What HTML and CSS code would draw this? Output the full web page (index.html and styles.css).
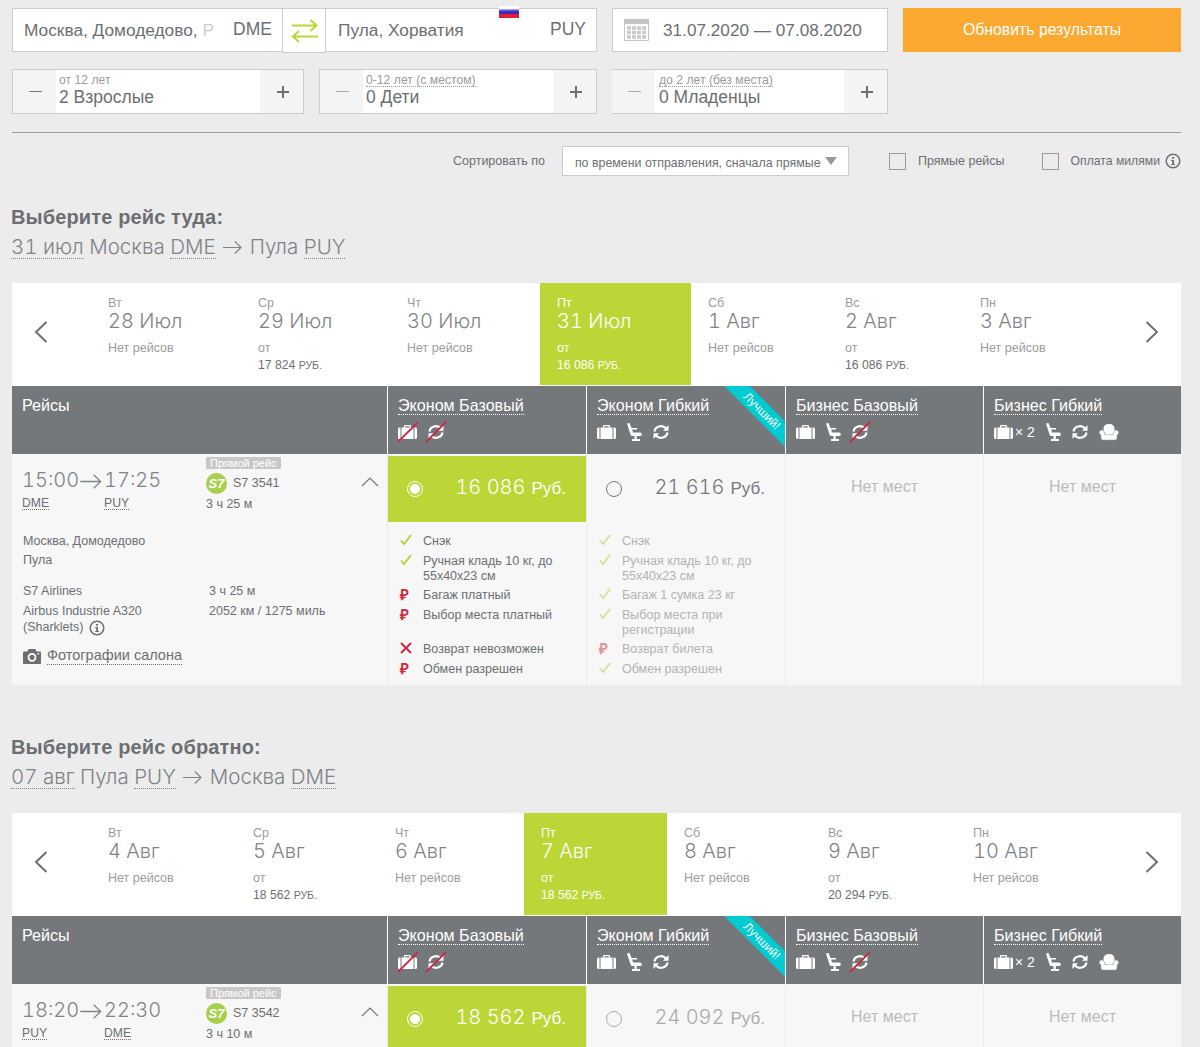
FILE: index.html
```
<!DOCTYPE html>
<html lang="ru">
<head>
	<meta charset="utf-8">
	<title>Выбор рейсов</title>
	<link rel="stylesheet" href="styles.css">
</head>
<body>
	<!-- Icons -->
	<svg class="sprite">
		<symbol id="bag" viewBox="0 0 19 14">
			<path d="M0 4q0-1.500 1.500-1.500H2.500V14H1.500Q0 14 0 12.500zM16.500 2.500h1Q19 2.500 19 4v8.500Q19 14 17.500 14h-1zM3.500 2.500H6V1q0-1 1-1h5q1 0 1 1v1.500h2.500V14h-12zM7.200 2.500h4.600V1.200H7.200z" fill-rule="evenodd" fill="#fff"/>
		</symbol>
		<symbol id="seat" viewBox="0 0 15 18">
			<path d="M0 0.500L2.500 0 4.500 5H10v1.600H5.200L6 9.500h7q2 0 1.800 2-.2 1.500-1.500 1.500H9.800v3H13V18H5v-2h2.500V13H5.500Q4 13 3.500 11.500z" fill="#fff"/>
		</symbol>
		<symbol id="turn" viewBox="0 0 16 16">
			<path d="M1.500 7.500A6.500 6 0 0 1 13 4.500M14.500 8.500A6.500 6 0 0 1 3 11.500" fill="none" stroke="#fff" stroke-width="2.200"/>
			<path d="M15.500 1V6.800H10zM0.500 15V9.200H6z" fill="#fff"/>
		</symbol>
		<symbol id="sofa" viewBox="0 0 20 17">
			<path d="M4.500 7V5Q4.500 0 10 0t5.500 5V7L13 11H7z" fill="#fff"/>
			<path d="M3 6Q.3 6.200.3 8.500.3 10 2 11V14q0 2 2 2H16q2 0 2-2V11q1.700-1 1.700-2.500Q19.700 6.200 17 6q-2 0-3 4.500H6Q5 6 3 6z" fill="#fff" stroke="#9a9c9e" stroke-width=".5"/>
		</symbol>
		<symbol id="info" viewBox="0 0 16 16">
			<circle cx="8" cy="8" r="6.800" fill="none" stroke="#6c6f72" stroke-width="1.500"/>
			<path d="M7 4h2v1.700H7zM6.200 7H9v4h1v1H6.200v-1H7.200V8h-1z" fill="#6c6f72"/>
		</symbol>
		<symbol id="check" viewBox="0 0 12 12">
			<path d="M1 6.500L4 10 11 1" fill="none" stroke="#b0d136" stroke-width="1.800"/>
		</symbol>
		<symbol id="cross" viewBox="0 0 12 12">
			<path d="M1 1L11 11M11 1L1 11" stroke="#cf2940" stroke-width="2"/>
		</symbol>
		<symbol id="camera" viewBox="0 0 18 15">
			<path d="M0 3.500q0-1 1-1H4.500L5.500 0h7l1 2.500H17Q18 2.500 18 3.500v10.500q0 1-1 1H1Q0 15 0 14z" fill="#6c6f72"/>
			<circle cx="9" cy="8.300" r="3.500" fill="none" stroke="#fff" stroke-width="1.800"/>
			<rect x="14.500" y="4" width="1.500" height="1.500" fill="#fff"/>
		</symbol>
		<symbol id="prev" viewBox="0 0 14 22">
			<path d="M12.500 1L2 11 12.500 21" fill="none" stroke="#6c6f72" stroke-width="2"/>
		</symbol>
		<symbol id="next" viewBox="0 0 14 22">
			<path d="M1.500 1L12 11 1.500 21" fill="none" stroke="#6c6f72" stroke-width="2"/>
		</symbol>
		<symbol id="arrow" viewBox="0 0 20 14">
			<path d="M0 7H19M12.500.7L19 7l-6.500 6.300" fill="none" stroke="#808386" stroke-width="1.200"/>
		</symbol>
		<symbol id="up" viewBox="0 0 18 10">
			<path d="M1 9L9 1l8 8" fill="none" stroke="#75787b" stroke-width="1.200"/>
		</symbol>
	</svg>

	<div class="page">
		<!-- Search form -->
		<div class="search">
			<div class="cities">
				<div class="field from"><span class="city">Москва, Домодедово, <i>Р</i></span><span class="code">DME</span></div>
				<div class="swap">
					<svg width="28" height="24" viewBox="0 0 28 24"><path d="M1 6.500H26M19.500 1l6 5.500-6 5.500M27 17.500H2M8 12l-6 5.500L8 23" fill="none" stroke="#bcd637" stroke-width="2"/></svg>
				</div>
				<div class="field to"><span class="city">Пула, Хорватия</span><span class="code">PUY</span><span class="flag"></span></div>
			</div>
			<div class="field dates">
				<svg width="25" height="22" viewBox="0 0 25 22"><path d="M.5.500h24v21H.5z" fill="none" stroke="#c5c5c5"/><path d="M0 0h25v5H0z" fill="#c5c5c5"/><path d="M3 9H22M3 13.500H22M3 18H22" stroke="#c8c8c8" stroke-width="3.500" stroke-dasharray="3.800 1.270"/></svg>
				<span>31.07.2020 — 07.08.2020</span>
			</div>
			<div class="submit"><span>Обновить результаты</span></div>
		</div>
		<div class="pax">
			<div class="counter adults">
				<div class="btn"><b class="minus"></b></div>
				<div class="val"><small>от 12 лет</small><span>2 Взрослые</span></div>
				<div class="btn"><b class="plus"></b></div>
			</div>
			<div class="counter kids">
				<div class="btn off"><b class="minus"></b></div>
				<div class="val"><small class="dot">0-12 лет (с местом)</small><span>0 Дети</span></div>
				<div class="btn"><b class="plus"></b></div>
			</div>
			<div class="counter infants">
				<div class="btn off"><b class="minus"></b></div>
				<div class="val"><small class="dot">до 2 лет (без места)</small><span>0 Младенцы</span></div>
				<div class="btn"><b class="plus"></b></div>
			</div>
		</div>

		<div class="sort">
			<span class="sort-label">Сортировать по</span>
			<div class="select"><span>по времени отправления, сначала прямые</span><i></i></div>
			<div class="box"></div><span class="direct">Прямые рейсы</span>
			<div class="box"></div><span class="miles">Оплата милями</span>
			<svg width="16" height="16"><use href="#info"/></svg>
		</div>

		<!-- Outbound -->
		<section>
			<h2>Выберите рейс туда:</h2>
			<div class="route"><u>31 июл</u> Москва <u>DME</u> <svg width="19" height="15"><use href="#arrow"/></svg> Пула <u>PUY</u></div>
			<div class="week week-there">
				<div class="nav"><svg width="14" height="22"><use href="#prev"/></svg></div>
				<div class="day"><small>Вт</small><b>28 Июл</b><span>Нет рейсов</span></div>
				<div class="day"><small>Ср</small><b>29 Июл</b><span>от</span><em>17 824 <i>РУБ.</i></em></div>
				<div class="day"><small>Чт</small><b>30 Июл</b><span>Нет рейсов</span></div>
				<div class="day active"><small>Пт</small><b>31 Июл</b><span>от</span><em>16 086 <i>РУБ.</i></em></div>
				<div class="day"><small>Сб</small><b>1 Авг</b><span>Нет рейсов</span></div>
				<div class="day"><small>Вс</small><b>2 Авг</b><span>от</span><em>16 086 <i>РУБ.</i></em></div>
				<div class="day"><small>Пн</small><b>3 Авг</b><span>Нет рейсов</span></div>
				<div class="nav"><svg width="14" height="22"><use href="#next"/></svg></div>
			</div>
			<div class="fares head">
				<div>Рейсы</div>
				<div><u>Эконом Базовый</u>
					<p><span class="no"><svg width="19" height="14"><use href="#bag"/></svg></span><span class="no gap"><svg width="16" height="16"><use href="#turn"/></svg></span></p>
				</div>
				<div><u>Эконом Гибкий</u>
					<p><svg width="19" height="14"><use href="#bag"/></svg><svg class="gap" width="15" height="18"><use href="#seat"/></svg><svg class="gap" width="16" height="16"><use href="#turn"/></svg></p>
					<div class="corner"><span>Лучший!</span></div>
				</div>
				<div><u>Бизнес Базовый</u>
					<p><svg width="19" height="14"><use href="#bag"/></svg><svg class="gap" width="15" height="18"><use href="#seat"/></svg><span class="no gap"><svg width="16" height="16"><use href="#turn"/></svg></span></p>
				</div>
				<div><u>Бизнес Гибкий</u>
					<p><svg width="19" height="14"><use href="#bag"/></svg><span class="x2">× 2</span><svg class="gap" width="15" height="18"><use href="#seat"/></svg><svg class="gap" width="16" height="16"><use href="#turn"/></svg><svg class="gap" width="20" height="17"><use href="#sofa"/></svg></p>
				</div>
			</div>
			<div class="fares body">
				<div class="flight">
					<div class="summary">
						<div class="times">
							<div class="dep"><b>15:00</b><u>DME</u></div>
							<svg width="22" height="15"><use href="#arrow"/></svg>
							<div class="arr"><b>17:25</b><u>PUY</u></div>
						</div>
						<div class="number">
							<span class="tag">Прямой рейс</span>
							<div class="carrier"><i>S7</i>S7 3541</div>
							<span>3 ч 25 м</span>
						</div>
						<svg class="toggle" width="18" height="10"><use href="#up"/></svg>
					</div>
					<div class="details">
						<div class="left">
							<p>Москва, Домодедово</p>
							<p>Пула</p>
							<p class="airline">S7 Airlines</p>
							<p>Airbus Industrie A320</p>
							<p class="model">(Sharklets) <svg width="16" height="16"><use href="#info"/></svg></p>
						</div>
						<div class="right">
							<p>3 ч 25 м</p>
							<p>2052 км / 1275 миль</p>
						</div>
					</div>
					<div class="photos"><svg width="18" height="15"><use href="#camera"/></svg><u>Фотографии салона</u></div>
				</div>
				<div class="fare selected">
					<div class="price"><i class="radio"></i><b>16 086</b><span>Руб.</span></div>
					<ul>
						<li><svg width="12" height="12"><use href="#check"/></svg>Снэк</li>
						<li><svg width="12" height="12"><use href="#check"/></svg>Ручная кладь 10 кг, до<br>55х40х23 см</li>
						<li><i>₽</i>Багаж платный</li>
						<li class="two"><i>₽</i>Выбор места платный</li>
						<li><svg width="12" height="12"><use href="#cross"/></svg>Возврат невозможен</li>
						<li><i>₽</i>Обмен разрешен</li>
					</ul>
				</div>
				<div class="fare">
					<div class="price"><i class="radio"></i><b>21 616</b><span>Руб.</span></div>
					<ul class="dim">
						<li><svg width="12" height="12"><use href="#check"/></svg>Снэк</li>
						<li><svg width="12" height="12"><use href="#check"/></svg>Ручная кладь 10 кг, до<br>55х40х23 см</li>
						<li><svg width="12" height="12"><use href="#check"/></svg>Багаж 1 сумка 23 кг</li>
						<li class="two"><svg width="12" height="12"><use href="#check"/></svg>Выбор места при<br>регистрации</li>
						<li><i>₽</i>Возврат билета</li>
						<li><svg width="12" height="12"><use href="#check"/></svg>Обмен разрешен</li>
					</ul>
				</div>
				<div class="fare none">Нет мест</div>
				<div class="fare none">Нет мест</div>
			</div>
		</section>

		<!-- Return -->
		<section>
			<h2>Выберите рейс обратно:</h2>
			<div class="route"><u>07 авг</u> Пула <u>PUY</u> <svg width="19" height="15"><use href="#arrow"/></svg> Москва <u>DME</u></div>
			<div class="week week-back">
				<div class="nav"><svg width="14" height="22"><use href="#prev"/></svg></div>
				<div class="day"><small>Вт</small><b>4 Авг</b><span>Нет рейсов</span></div>
				<div class="day"><small>Ср</small><b>5 Авг</b><span>от</span><em>18 562 <i>РУБ.</i></em></div>
				<div class="day"><small>Чт</small><b>6 Авг</b><span>Нет рейсов</span></div>
				<div class="day active"><small>Пт</small><b>7 Авг</b><span>от</span><em>18 562 <i>РУБ.</i></em></div>
				<div class="day"><small>Сб</small><b>8 Авг</b><span>Нет рейсов</span></div>
				<div class="day"><small>Вс</small><b>9 Авг</b><span>от</span><em>20 294 <i>РУБ.</i></em></div>
				<div class="day"><small>Пн</small><b>10 Авг</b><span>Нет рейсов</span></div>
				<div class="nav"><svg width="14" height="22"><use href="#next"/></svg></div>
			</div>
			<div class="fares head">
				<div>Рейсы</div>
				<div><u>Эконом Базовый</u>
					<p><span class="no"><svg width="19" height="14"><use href="#bag"/></svg></span><span class="no gap"><svg width="16" height="16"><use href="#turn"/></svg></span></p>
				</div>
				<div><u>Эконом Гибкий</u>
					<p><svg width="19" height="14"><use href="#bag"/></svg><svg class="gap" width="15" height="18"><use href="#seat"/></svg><svg class="gap" width="16" height="16"><use href="#turn"/></svg></p>
					<div class="corner"><span>Лучший!</span></div>
				</div>
				<div><u>Бизнес Базовый</u>
					<p><svg width="19" height="14"><use href="#bag"/></svg><svg class="gap" width="15" height="18"><use href="#seat"/></svg><span class="no gap"><svg width="16" height="16"><use href="#turn"/></svg></span></p>
				</div>
				<div><u>Бизнес Гибкий</u>
					<p><svg width="19" height="14"><use href="#bag"/></svg><span class="x2">× 2</span><svg class="gap" width="15" height="18"><use href="#seat"/></svg><svg class="gap" width="16" height="16"><use href="#turn"/></svg><svg class="gap" width="20" height="17"><use href="#sofa"/></svg></p>
				</div>
			</div>
			<div class="fares body short">
				<div class="flight">
					<div class="summary">
						<div class="times">
							<div class="dep"><b>18:20</b><u>PUY</u></div>
							<svg width="22" height="15"><use href="#arrow"/></svg>
							<div class="arr"><b>22:30</b><u>DME</u></div>
						</div>
						<div class="number">
							<span class="tag">Прямой рейс</span>
							<div class="carrier"><i>S7</i>S7 3542</div>
							<span>3 ч 10 м</span>
						</div>
						<svg class="toggle" width="18" height="10"><use href="#up"/></svg>
					</div>
				</div>
				<div class="fare selected">
					<div class="price"><i class="radio"></i><b>18 562</b><span>Руб.</span></div>
				</div>
				<div class="fare">
					<div class="price dim"><i class="radio"></i><b>24 092</b><span>Руб.</span></div>
				</div>
				<div class="fare none">Нет мест</div>
				<div class="fare none">Нет мест</div>
			</div>
		</section>
	</div>
</body>
</html>
```
FILE: styles.css
```
* {
	box-sizing: border-box;
}
body {
	background: #ececec;
	color: #6c6f72;
	font: 12.5px/15px "Liberation Sans", Arial, sans-serif;
	margin: 0;
}
p, ul, h2 {
	margin: 0;
	padding: 0;
}
svg {
	display: block;
	flex: none;
}
i, em {
	font-style: normal;
}
u {
	border-bottom: 1px dotted currentColor;
	text-decoration: none;
}
.sprite {
	display: none;
}
.page {
	height: 1047px;
	overflow: hidden;
	padding: 8px 0 0 12px;
	width: 1181px;
}

/* search form */
.search, .pax {
	display: flex;
	gap: 15px;
}
.search {
	height: 44px;
}
.cities {
	display: flex;
	width: 585px;
}
.field {
	align-items: center;
	background: #fff;
	border: 1px solid #ccc;
	display: flex;
	font-size: 17.3px;
	height: 44px;
	white-space: nowrap;
}
.from {
	border-right: 0;
	padding: 0 10px 0 11px;
	width: 270px;
}
.city {
	flex: 1;
}
.city i {
	opacity: .35;
}
.code {
	font-size: 17.5px;
	margin-top: -2px;
}
.swap {
	align-items: center;
	background: #fff;
	border: 1px solid #ccc;
	display: flex;
	height: 45px;
	justify-content: center;
	padding-left: 1px;
	width: 44px;
}
.to {
	border-left: 0;
	padding: 0 10px 0 12px;
	position: relative;
	width: 271px;
}
.flag {
	background: linear-gradient(#fff 0 20%, #4a3ee0 40%, #2a20b8 60%, #e01f38 70%);
	height: 12px;
	left: 173px;
	position: absolute;
	top: -3px;
	width: 20px;
}
.dates {
	font-size: 17.2px;
	gap: 14px;
	padding-left: 11px;
	width: 276px;
}
.submit {
	background: #fba931;
	color: #fff;
	font-size: 15.8px;
	line-height: 43px;
	text-align: center;
	width: 278px;
}
.pax {
	margin-top: 17px;
}
.counter {
	background: #fff;
	border: 1px solid #ccc;
	display: flex;
	height: 45px;
}
.adults {
	width: 292px;
}
.kids {
	width: 278px;
}
.infants {
	border-left: 0;
	width: 276px;
}
.btn {
	align-items: center;
	background: #f4f4f4;
	display: flex;
	justify-content: center;
	padding-left: 2px;
	width: 43px;
}
.off .minus {
	opacity: .6;
}
.minus {
	background: #75787b;
	height: 1px;
	width: 13px;
}
.plus {
	background: linear-gradient(#6c6f72 0 0) center / 100% 2px no-repeat, linear-gradient(#6c6f72 0 0) center / 2px 100% no-repeat;
	height: 12px;
	width: 12px;
}
.val {
	display: flex;
	flex: 1;
	flex-direction: column;
	align-items: flex-start;
	padding: 4px 0 0 3px;
}
.val small {
	color: #9a9c9e;
	font-size: 12.2px;
	line-height: 13px;
}
.val .dot {
	border-bottom: 1px dotted #9a9c9e;
	height: 13px;
}
.val span {
	font-size: 17.5px;
	line-height: 20px;
}
.infants .val {
	padding-left: 4px;
}
.sort {
	align-items: center;
	border-top: 1px solid #9a9d9c;
	display: flex;
	height: 57px;
	justify-content: flex-end;
	margin-top: 18px;
}
.sort-label {
	margin-right: 17px;
}
.select {
	align-items: center;
	background: #fff;
	border: 1px solid #ccc;
	display: flex;
	font-size: 12.4px;
	height: 30px;
	justify-content: space-between;
	margin-right: 40px;
	padding: 4px 11px 0 12px;
	width: 287px;
	white-space: nowrap;
}
.select i {
	border: 6px solid transparent;
	border-bottom: 0;
	border-top: 8px solid #999;
	margin-top: -4px;
}
.box {
	border: 1px solid #999;
	height: 17px;
	margin-right: 12px;
	width: 17px;
}
.direct {
	margin-right: 37px;
}
.miles {
	font-size: 12.2px;
	margin-right: 5px;
}

/* direction */
section {
	height: 530px;
}
h2 {
	font-size: 20px;
	letter-spacing: .13px;
	line-height: 24px;
	margin-left: -1px;
	padding-top: 16px;
}
.route {
	color: #808386;
	font: 300 20.5px/24px Inter, sans-serif;
	font-feature-settings: "tnum";
	height: 54px;
	margin-left: -1px;
	margin-top: 6px;
	white-space: nowrap;
}
.route svg {
	display: inline-block;
	margin: 0 2px;
	vertical-align: -1px;
}
.route u {
	display: inline-block;
	height: 24px;
}
.week {
	background: #fff;
	display: grid;
	height: 103px;
	margin-top: -6px;
}
.week-there {
	grid-template-columns: 79px 150px 149px 150px 151px 137px 135px 134px 84px;
}
.week-back {
	grid-template-columns: 79px 145px 142px 146px 143px 144px 145px 144px 81px;
}
.nav {
	align-items: center;
	display: flex;
	padding: 0 0 5px 22px;
}
.nav:last-child {
	justify-content: flex-end;
	padding-right: 22px;
}
.day {
	color: #9a9c9e;
	display: flex;
	flex-direction: column;
	height: 102px;
	padding: 13px 0 0 17px;
}
.day small {
	font-size: 12.5px;
}
.day b {
	color: #808386;
	font: 300 20px/22px Inter, sans-serif;
	font-feature-settings: "tnum";
	margin-bottom: 9px;
	margin-top: -1px;
}
.day em {
	color: #6c6f72;
	font-size: 12.2px;
	margin-top: 2px;
}
.day em i {
	font-size: 10.5px;
}
.active {
	background: #bcd637;
}
.active, .active b, .active em {
	color: #fff;
}

/* fares table */
.fares {
	display: grid;
	grid-template-columns: 375px 198px 198px 197px 197px;
	column-gap: 1px;
}
.head {
	background: #fff;
	color: #fff;
	font-size: 16.1px;
	height: 68px;
	line-height: 19px;
}
.head > div {
	background: #75787b;
	overflow: hidden;
	padding: 10px 0 0 10px;
	position: relative;
}
.head u {
	display: inline-block;
	height: 19px;
	line-height: 19px;
}
.head p {
	align-items: center;
	display: flex;
	height: 20px;
	margin-top: 7px;
}
.head .gap {
	margin-left: 11px;
}
.no {
	position: relative;
}
.no:after {
	background: #cf2940;
	content: "";
	height: 2px;
	left: 50%;
	margin-left: -14px;
	position: absolute;
	top: calc(50% - 1px);
	transform: rotate(-45deg);
	width: 28px;
}
.x2 {
	font-size: 14px;
	margin-left: 2px;
}
.corner {
	background: #00cbd1;
	font-size: 12px;
	height: 18px;
	line-height: 18px;
	position: absolute;
	right: -27px;
	text-align: center;
	top: 16px;
	transform: rotate(45deg);
	width: 100px;
}
.body {
	background: linear-gradient(#f7f7f7 0 0) top / 100% 2px no-repeat #ebebeb;
	height: 231px;
	padding-top: 2px;
}
.short {
	height: 63px;
	overflow: hidden;
}
.body > div {
	background: #f7f7f7;
}
.summary {
	display: flex;
	height: 78px;
	padding-left: 10px;
}
.times {
	display: flex;
	padding-top: 12px;
	width: 184px;
}
.times b {
	color: #808386;
	font: 300 20px/24px Inter, sans-serif;
	font-feature-settings: "tnum";
	display: block;
}
.times svg {
	margin: 6px 2px 0 3px;
}
.dep, .arr {
	width: 55px;
}
.times u {
	display: inline-block;
	font-size: 12.2px;
	height: 14px;
	line-height: 15px;
	margin-top: 4px;
}
.tag {
	background: #c8c8c8;
	border-radius: 1px;
	color: #fff;
	display: block;
	font-size: 11px;
	height: 12px;
	line-height: 12px;
	margin-top: 1px;
	padding: 0 4px;
	width: 75px;
	white-space: nowrap;
}
.carrier {
	align-items: center;
	display: flex;
	height: 21px;
	margin: 4px 0 3px;
}
.carrier i {
	background: #a5cf4c;
	border-radius: 50%;
	color: #fff;
	font: italic bold 13px/21px "Liberation Sans", sans-serif;
	height: 21px;
	margin-right: 6px;
	text-align: center;
	width: 21px;
}
.toggle {
	margin-left: auto;
	margin-right: 8px;
	margin-top: 21px;
}
.details {
	display: flex;
	height: 109px;
	padding-left: 11px;
}
.left {
	width: 186px;
}
.left p {
	margin-bottom: 4px;
}
.left .airline {
	margin-top: 16px;
	margin-bottom: 5px;
}
.left .model {
	display: flex;
	gap: 6px;
	margin-top: -3px;
}
.right {
	padding-top: 50px;
}
.right p {
	margin-bottom: 5px;
}
.photos {
	align-items: center;
	display: flex;
	font-size: 14.5px;
	gap: 6px;
	line-height: 17px;
	padding-left: 11px;
	margin-top: 4px;
}
.price {
	align-items: baseline;
	color: #75787b;
	display: flex;
	height: 66px;
	justify-content: flex-end;
	line-height: 62px;
	padding: 0 20px 0 19px;
}
.price b {
	font: 300 20px/62px Inter, sans-serif;
	font-feature-settings: "tnum";
	margin-left: auto;
	margin-right: 6px;
}
.price span {
	font-size: 17px;
}
.radio {
	align-self: center;
	border: 1px solid #75787b;
	border-radius: 50%;
	height: 16px;
	width: 16px;
}
.price.dim {
	color: #a9abad;
}
.price.dim .radio {
	border-color: #a9abad;
}
.selected .price {
	background: #bcd637;
	color: #fff;
}
.selected .radio {
	background: radial-gradient(#fff 4.500px, transparent 5.500px);
	border-color: #fff;
}
.fare ul {
	display: flex;
	flex-direction: column;
	gap: 4.5px;
	list-style: none;
	padding-top: 12px;
}
.fare li {
	min-height: 15px;
	padding-left: 35px;
	position: relative;
	white-space: nowrap;
}
.fare .two {
	min-height: 30px;
}
.fare li svg, .fare li i {
	left: 12px;
	position: absolute;
	top: 0;
}
.fare li i {
	color: #cf2940;
	font-size: 15px;
	font-weight: bold;
	line-height: 13px;
}
.fare ul.dim {
	opacity: .5;
}
.none {
	color: #bbb;
	font-size: 16px;
	line-height: 62px;
	text-align: center;
}
```
